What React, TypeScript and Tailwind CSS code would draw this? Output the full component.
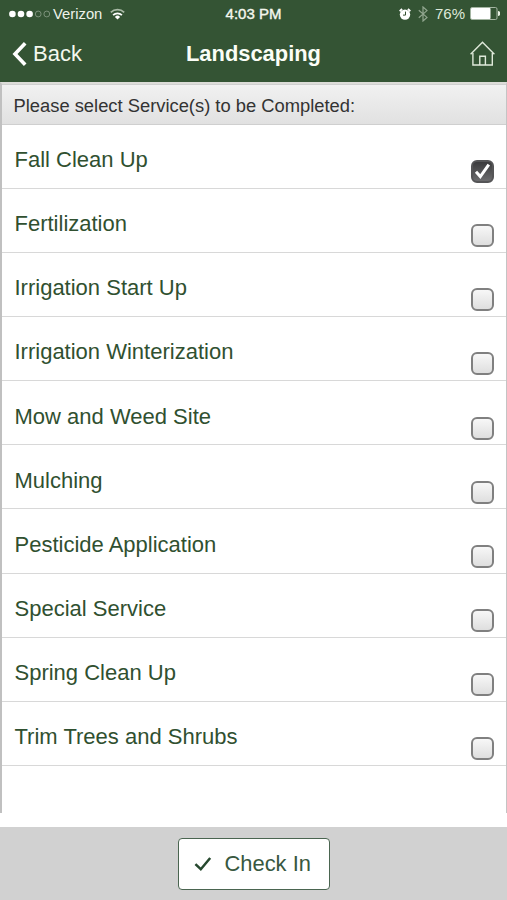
import { useState } from "react";

const services = [
  "Fall Clean Up",
  "Fertilization",
  "Irrigation Start Up",
  "Irrigation Winterization",
  "Mow and Weed Site",
  "Mulching",
  "Pesticide Application",
  "Special Service",
  "Spring Clean Up",
  "Trim Trees and Shrubs",
];

const StatusBar = () => {
  return (
    <div className="grid h-[28px] grid-cols-3 items-center text-[15px] leading-none">
      <div className="flex items-center pl-[9px]">
        <svg width="42" height="8" viewBox="0 0 42 8">
          <circle cx="3.4" cy="4" r="3.3" fill="#fff" />
          <circle cx="12" cy="4" r="3.3" fill="#fff" />
          <circle cx="20.6" cy="4" r="3.3" fill="#fff" />
          <circle cx="29.2" cy="4" r="2.9" fill="none" stroke="#8ba08a" strokeWidth="0.8" />
          <circle cx="37.8" cy="4" r="2.9" fill="none" stroke="#8ba08a" strokeWidth="0.8" />
        </svg>
        <span className="ml-[2px] text-[14.8px] text-[#eef3ea]">Verizon</span>
        <svg className="ml-[8px]" width="15" height="12" viewBox="0 0 15 12" fill="none" strokeWidth="1.7">
          <path d="M0.8 4.4 A9.6 9.6 0 0 1 14.2 4.4" stroke="#a9baa6" />
          <path d="M3.1 7.2 A6.1 6.1 0 0 1 11.9 7.2" stroke="#fff" />
          <path d="M7.5 11.4 L4.9 8.9 A3.7 3.7 0 0 1 10.1 8.9 Z" fill="#fff" />
        </svg>
      </div>
      <div className="pb-px text-center text-[#f4f7ee] [-webkit-text-stroke:0.4px]">4:03 PM</div>
      <div className="flex items-center justify-end pr-[7px] pb-px">
        <svg width="12" height="12" viewBox="0 0 12 12">
          <circle cx="6" cy="6.6" r="5.2" fill="#fff" />
          <path d="M0.7 3.2 L3.1 1 M11.3 3.2 L8.9 1" stroke="#fff" strokeWidth="1.9" />
          <path d="M6.5 3.6 V7.1 H4" fill="none" stroke="#345030" strokeWidth="1" />
        </svg>
        <svg className="ml-[7px]" width="10" height="16" viewBox="0 0 10 16" fill="none" stroke="#91a68f" strokeWidth="1.2">
          <path d="M0.8 4.2 L9 11.4 L5 15 V1 L9 4.6 L0.8 11.8" />
        </svg>
        <span className="ml-[7px] text-[#dfe9da]">76%</span>
        <svg className="ml-[5px]" width="30" height="13" viewBox="0 0 30 13">
          <rect x="0.5" y="0.5" width="26.5" height="12" rx="1.5" fill="none" stroke="#a4b5a2" />
          <rect x="1" y="1" width="19.5" height="11" rx="0.8" fill="#fff" />
          <path d="M28 4.1 A2.4 2.4 0 0 1 28 8.9 Z" fill="#e6eee2" />
        </svg>
      </div>
    </div>
  );
};

const NavBar = () => {
  return (
    <div className="grid h-[54px] grid-cols-3 items-center pb-[3px] text-[22px] leading-none">
      <button className="flex items-center pl-[12px] text-[#f4f8ee]">
        <svg width="15" height="24" viewBox="0 0 15 24" fill="none" stroke="#fff" strokeWidth="3.6">
          <path d="M13.2 1.3 L3 12 L13.2 22.7" />
        </svg>
        <span className="ml-[6px]">Back</span>
      </button>
      <h1 className="text-center text-[21.9px] font-bold text-[#fbfdf6]">Landscaping</h1>
      <button className="flex justify-end pr-[12px]" aria-label="Home">
        <svg width="25" height="25" viewBox="0 0 25 25" fill="none" stroke="#dfe9da" strokeWidth="1.4">
          <path d="M0.6 13.2 L12.5 1.2 L24.4 13.2" />
          <path d="M2.9 12 V24 H22.3 V12" />
          <path d="M9.8 24 V15.2 H15.4 V24" />
        </svg>
      </button>
    </div>
  );
};

const CheckBox = ({ checked }: { checked: boolean }) => {
  return (
    <span
      className={
        checked
          ? "flex size-[23px] items-center justify-center rounded-[6px] border-2 border-[#555557] bg-linear-to-b from-[#363638] to-[#727274] bg-origin-border"
          : "flex size-[23px] rounded-[6px] border-2 border-[#808080] bg-linear-to-b from-[#fafafa] to-[#dcdcdc] bg-origin-border"
      }
    >
      {checked && (
        <svg className="shrink-0" width="19" height="19" viewBox="0 0 19 19" fill="none" stroke="#fff" strokeWidth="3">
          <path d="M3 9.8 L7.3 14.6 L15.8 2.6" />
        </svg>
      )}
    </span>
  );
};

const App = () => {
  const [selected, setSelected] = useState<string[]>(["Fall Clean Up"]);

  const toggle = (name: string) => {
    if (selected.includes(name)) {
      setSelected(selected.filter((item) => item !== name));
    } else {
      setSelected([...selected, name]);
    }
  };

  return (
    <div className="flex h-[900px] w-[507px] flex-col overflow-hidden bg-white font-['Liberation_Sans',Arial,sans-serif]">
      <header className="h-[82px] shrink-0 bg-[#345434]">
        <StatusBar />
        <NavBar />
      </header>

      <main className="h-[731px] shrink-0 border-t-2 border-r border-l-2 border-t-[#dcdcd8] border-r-[#c4c4c4] border-l-[#c0c0c0]">
        <div className="flex h-[40.5px] items-center border-t border-b border-t-[#cfcfcf] border-b-[#cfcfcf] bg-linear-to-b from-[#f1f1f1] to-[#e1e1e1] pt-[3px] pl-[11.5px] text-[18.35px] text-[#333]">
          Please select Service(s) to be Completed:
        </div>
        <ul>
          {services.map((name) => (
            <li
              key={name}
              className="flex h-[64.17px] justify-between border-b-[1.5px] border-[#d8d8d8] pr-[12px] pl-[12.5px]"
              onClick={() => toggle(name)}
            >
              <span className="pt-[22.5px] text-[22px] leading-[26px] text-[#305030]">{name}</span>
              <span className="pt-[35.5px]">
                <CheckBox checked={selected.includes(name)} />
              </span>
            </li>
          ))}
        </ul>
      </main>

      <footer className="mt-auto flex h-[73px] justify-center bg-[#d1d1d1] pt-[11px]">
        <button className="flex h-[52px] w-[152px] items-center rounded-[4px] border-[1.5px] border-[#4a6550] bg-white pl-[15px] text-[21.9px] text-[#385840]">
          <svg width="18" height="16" viewBox="0 0 18 16" fill="none" stroke="#26482e" strokeWidth="2.5">
            <path d="M1.4 8.2 L6.8 13.2 L16.2 2" />
          </svg>
          <span className="ml-[13px]">Check In</span>
        </button>
      </footer>
    </div>
  );
};

export default App;
